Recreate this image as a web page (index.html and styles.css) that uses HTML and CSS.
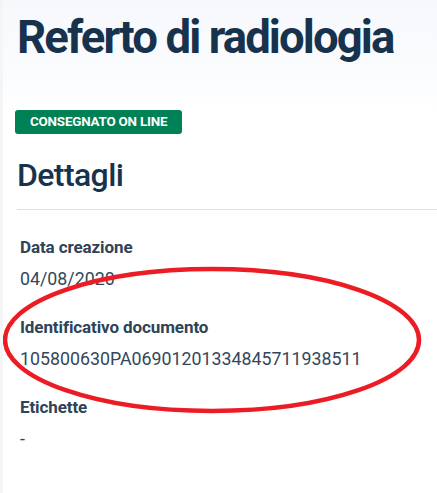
FILE: index.html
```html
<!DOCTYPE html>
<html lang="it">
<head>
<meta charset="utf-8">
<link rel="stylesheet" href="styles.css">
</head>
<body>
<div class="page">
  <header class="hero">
    <h1 class="title">Referto di radiologia</h1>
  </header>
  <div class="content">
    <span class="badge">CONSEGNATO ON LINE</span>
    <h2 class="section">Dettagli</h2>
    <dl class="details">
      <div class="item">
        <dt>Data creazione</dt>
        <dd>04/08/2020</dd>
      </div>
      <div class="item">
        <dt>Identificativo documento</dt>
        <dd>105800630PA06901201334845711938511</dd>
      </div>
      <div class="item">
        <dt>Etichette</dt>
        <dd>-</dd>
      </div>
    </dl>
  </div>
  <svg class="mark" width="437" height="493" viewBox="0 0 437 493">
    <ellipse cx="212" cy="340" rx="207" ry="71" fill="none" stroke="#ec1c24" stroke-width="4.5"/>
  </svg>
</div>
</body>
</html>
```
FILE: styles.css
```css
html, body {
  margin: 0;
  padding: 0;
}
body {
  background: #fff;
  font-family: Roboto, "Liberation Sans", sans-serif;
  color: #17324d;
}
.page {
  position: relative;
  width: 437px;
  height: 493px;
  overflow: hidden;
  border-left: 3px solid #f4f5f6;
  box-sizing: border-box;
  background: linear-gradient(#f6f8fc 0px, #fbfcfe 80px, #fff 110px);
}
.hero {
  padding: 9px 0 0 14px;
  height: 110px;
  box-sizing: border-box;
}
.title {
  margin: 0;
  font-weight: 700;
  font-size: 45.5px;
  line-height: 57px;
  letter-spacing: -1.9px;
  color: #17324d;
}
.content {
  padding: 0 0 0 12px;
}
.badge {
  display: block;
  width: max-content;
  background: #008055;
  color: #fff;
  font-weight: 700;
  font-size: 13.4px;
  line-height: 24px;
  height: 24px;
  padding: 0 15px 0 15px;
  border-radius: 3px;
  letter-spacing: -0.2px;
}
.section {
  margin: 21px 0 0 2px;
  font-weight: 500;
  font-size: 32px;
  line-height: 40px;
  color: #17324d;
  letter-spacing: -0.6px;
  padding-bottom: 14px;
  border-bottom: 1px solid #dcdfe4;
}
.details {
  margin: 25px 0 0 5px;
}
.item {
  margin-bottom: 24px;
}
.details dt {
  font-weight: 700;
  font-size: 17px;
  line-height: 24px;
  color: #2e4358;
  letter-spacing: -0.1px;
}
.details dd {
  margin: 8px 0 0 0;
  font-weight: 400;
  font-size: 17.8px;
  line-height: 24px;
  color: #33475b;
}
.mark {
  position: absolute;
  left: -3px;
  top: 0;
  pointer-events: none;
}
```
